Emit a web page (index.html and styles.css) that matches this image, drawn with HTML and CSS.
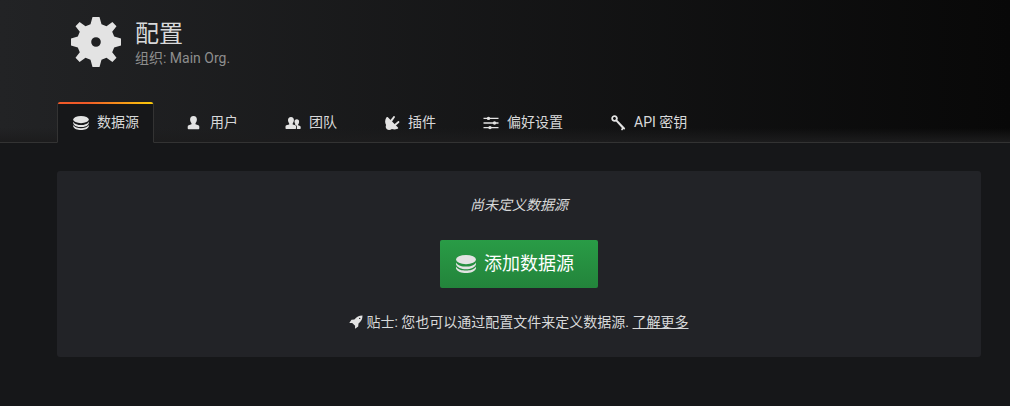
FILE: index.html
```html
<!DOCTYPE html>
<html lang="zh-CN">
<head>
<meta charset="utf-8">
<meta name="viewport" content="width=device-width, initial-scale=1">
<title>配置</title>
<link rel="stylesheet" href="styles.css">
</head>
<body>
<svg class="sprite" aria-hidden="true">
  <symbol id="database" viewBox="0 0 20 18">
    <ellipse cx="10" cy="4.6" rx="10" ry="4.6"/>
    <path d="M0 7.4C2 10.8 6 11.6 10 11.6S18 10.8 20 7.4V9.2C19 12.6 14.500 14.200 10 14.200S1 12.600 0 9.200Z"/>
    <path d="M0 11.600C2 15 6 15.600 10 15.600S18 15 20 11.600V13.400C19 16.600 14.500 18 10 18S1 16.600 0 13.400Z"/>
  </symbol>
</svg>
<header class="page-header">
  <div class="heading">
    <svg class="heading-icon" viewBox="0 0 50 50" aria-hidden="true">
      <path fill-rule="evenodd" d="M21.500 0h7l2 7.200 5 2.100L41.400 5 45.500 9.200 41.200 14.800 43.200 19.500 50 21.500v7l-6.800 2-2 4.700 4.300 5.600-4.100 4.200-5.900-4.300-5 2.100-2 7.200h-7l-2-7.200-5-2.100L8.600 45 4.500 40.800 8.800 35.200 6.800 30.500 0 28.500v-7l6.800-2 2-4.700L4.500 9.200 8.600 5l5.900 4.300 5-2.100ZM25 20.200a4.800 4.800 0 1 0 0 9.600 4.800 4.800 0 0 0 0-9.600Z"/>
    </svg>
    <div>
      <h1 class="title">配置</h1>
      <p class="subtitle">组织: Main Org.</p>
    </div>
  </div>
  <nav class="tabs">
    <a class="tab tab-active" href="#datasources" aria-current="page"><svg class="tab-icon" viewBox="0 0 16 16"><use href="#database" y="1" width="16" height="14"/></svg>数据源</a>
    <a class="tab" href="#users"><svg class="tab-icon" viewBox="0 0 16 16"><path d="M7.500 1c2.300 0 3.500 1.500 3.400 3.800-.1 1.600-.7 2.700-1.400 3.500v1l2.800.9c.7.300 1 .8 1 1.500v1.600c0 .5-.3.900-.8.900H2.500c-.5 0-.8-.4-.8-.9v-1.600c0-.7.300-1.200 1-1.500l2.800-.9v-1c-.7-.8-1.300-1.900-1.400-3.500C4 2.500 5.200 1 7.500 1Z"/></svg>用户</a>
    <a class="tab" href="#teams"><svg class="tab-icon" viewBox="0 0 16 16"><path d="M6 2c2 0 3 1.300 2.900 3.300C8.800 6.700 8.300 7.700 7.700 8.400v1l2.600.9c.6.200.8.600.8 1.200v1.700c0 .4-.3.700-.7.700H1.200c-.4 0-.7-.3-.7-.7v-1.700c0-.6.200-1 .8-1.200l2.900-.9v-1C3.600 7.700 3.100 6.700 3 5.300 2.900 3.300 4 2 6 2Z"/><path d="M11.800 4.300c1.600 0 2.400 1.100 2.300 2.700-.1 1.100-.5 1.800-1 2.400v.8l2 .7c.4.200.6.500.6 1v1.400c0 .4-.2.600-.6.600h-3.200c.2-1.800.1-3-.8-3.600l-.9-.4v-.5c.3-.8-.6-1.100-.7-2.400-.1-1.600.7-2.700 2.300-2.700Z"/></svg>团队</a>
    <a class="tab" href="#plugins"><svg class="tab-icon" viewBox="0 0 16 16"><path d="M3.900 2.300 14 12.400c.5.600.2 1.200-.5 1.400-2 .9-3.900.9-5.600.2-1.500 1.300-3.700 1.500-5 .3C1.600 13.200 1.400 11.500 2.100 10 .8 7.700.8 5.200 2.300 2.500c.4-.7 1-.8 1.600-.2Z"/><path d="m6 5.400 3.300-4c.9-.8 2.200.2 1.500 1.200L7.700 7Zm4.100 4.100 3.800-3.300c1-.7 2 .6 1.200 1.500l-3.800 3.400Z"/></svg>插件</a>
    <a class="tab" href="#preferences"><svg class="tab-icon" viewBox="0 0 16 16"><path d="M.5 2.700h15v1.400H.5Zm0 4.600h15v1.400H.5Zm0 4.600h15v1.400H.5Z"/><circle cx="5.500" cy="3.400" r="1.700"/><circle cx="11.500" cy="8" r="1.700"/><circle cx="7" cy="12.600" r="1.700"/></svg>偏好设置</a>
    <a class="tab" href="#apikeys"><svg class="tab-icon" viewBox="0 0 16 16"><path fill-rule="evenodd" d="M2.200 1.200C3.700-.1 6 0 7.100 1.500c.9 1.200.9 2.500.2 3.600l6.500 6.600c1 1 1.700 1.900 1.100 2.600l-.8.200-.5-.5-.9 1.100-.7.400-1-1.100.9-1.500L6 6.600C4.700 7.100 3.100 6.800 2.100 5.700 1 4.300 1 2.300 2.200 1.200Zm1.200 1.200c-.6.700-.5 1.600.1 2.200.6.500 1.500.4 2-.2.600-.6.500-1.500 0-2-.6-.6-1.500-.5-2.100 0Z"/></svg>API 密钥</a>
  </nav>
</header>
<main class="content">
  <section class="empty-card">
    <p class="empty-title"><em>尚未定义数据源</em></p>
    <button class="add-button" type="button"><svg class="button-icon" viewBox="0 0 20 18" aria-hidden="true"><use href="#database" width="20" height="18"/></svg>添加数据源</button>
    <p class="tip"><svg class="tip-icon" viewBox="0 0 14 14" aria-hidden="true"><path fill-rule="evenodd" d="M13.500.5C9.800.5 7.800 1.600 5.400 4.500L2.500 4.800.3 8l2.900-.1 2.900 2.900L6 13.700l3.200-2.200.3-2.900c2.900-2.400 4-4.400 4-8.100ZM10.700 2.700a.7.700 0 1 0 0 1.400.7.700 0 0 0 0-1.400Z"/></svg>贴士: 您也可以通过配置文件来定义数据源. <a class="tip-link" href="#learn-more">了解更多</a></p>
  </section>
</main>
</body>
</html>
```
FILE: styles.css
```css
* {
  box-sizing: border-box;
}

body {
  margin: 0;
  background: #161719;
  color: #d8d9da;
  font: 14px/21px Roboto, "Noto Sans CJK SC", sans-serif;
}

.sprite {
  display: none;
}

svg {
  flex: none;
  fill: #e3e3e3;
}

h1,
p {
  margin: 0;
  font-weight: 400;
}

.page-header {
  padding: 17px 29px 0 57px;
  border-bottom: 1px solid #333;
  background:
    linear-gradient(to top, #1c1c1d, transparent 14px),
    linear-gradient(90deg, #222325, #080808);
}

.heading {
  display: flex;
  gap: 14px;
  padding-left: 14px;
  margin-bottom: 33px;
}

.heading-icon {
  width: 50px;
  height: 50px;
}

.title {
  padding-top: 3px;
  font-size: 24px;
  line-height: 28px;
}

.subtitle {
  color: #8e8e8e;
}

.tabs {
  display: flex;
  gap: 16px;
  margin-bottom: -1px;
}

.tab {
  display: flex;
  align-items: center;
  gap: 8px;
  height: 41px;
  padding: 0 14px 0 15px;
  border: 1px solid transparent;
  color: #d8d9da;
  text-decoration: none;
  white-space: nowrap;
}

.tab-active {
  position: relative;
  border-color: #333;
  border-bottom-color: #161719;
  border-radius: 3px 3px 0 0;
  background: #161719;
}

.tab-active::before {
  content: "";
  position: absolute;
  top: -1px;
  left: 0;
  right: 0;
  height: 2px;
  border-radius: 2px 2px 0 0;
  background: linear-gradient(90deg, #f05a28 30%, #fbca0a);
}

.tab-icon {
  width: 16px;
  height: 16px;
}

.content {
  padding: 28px 29px 48px 57px;
}

.empty-card {
  display: flex;
  flex-direction: column;
  align-items: center;
  gap: 24px;
  padding: 24px;
  border-radius: 3px;
  background: #222327;
}

.add-button {
  display: flex;
  align-items: center;
  gap: 8px;
  height: 48px;
  padding: 0 24px 0 16px;
  border: 0;
  border-radius: 2px;
  background: linear-gradient(#299c46, #23843b);
  color: #fff;
  font: 18px/24px Roboto, "Noto Sans CJK SC", sans-serif;
}

.button-icon {
  width: 20px;
  height: 18px;
}

.tip-icon {
  width: 14px;
  height: 14px;
  margin-right: 3px;
  vertical-align: -2px;
}

.tip-link {
  color: inherit;
  text-decoration: underline;
}
```
